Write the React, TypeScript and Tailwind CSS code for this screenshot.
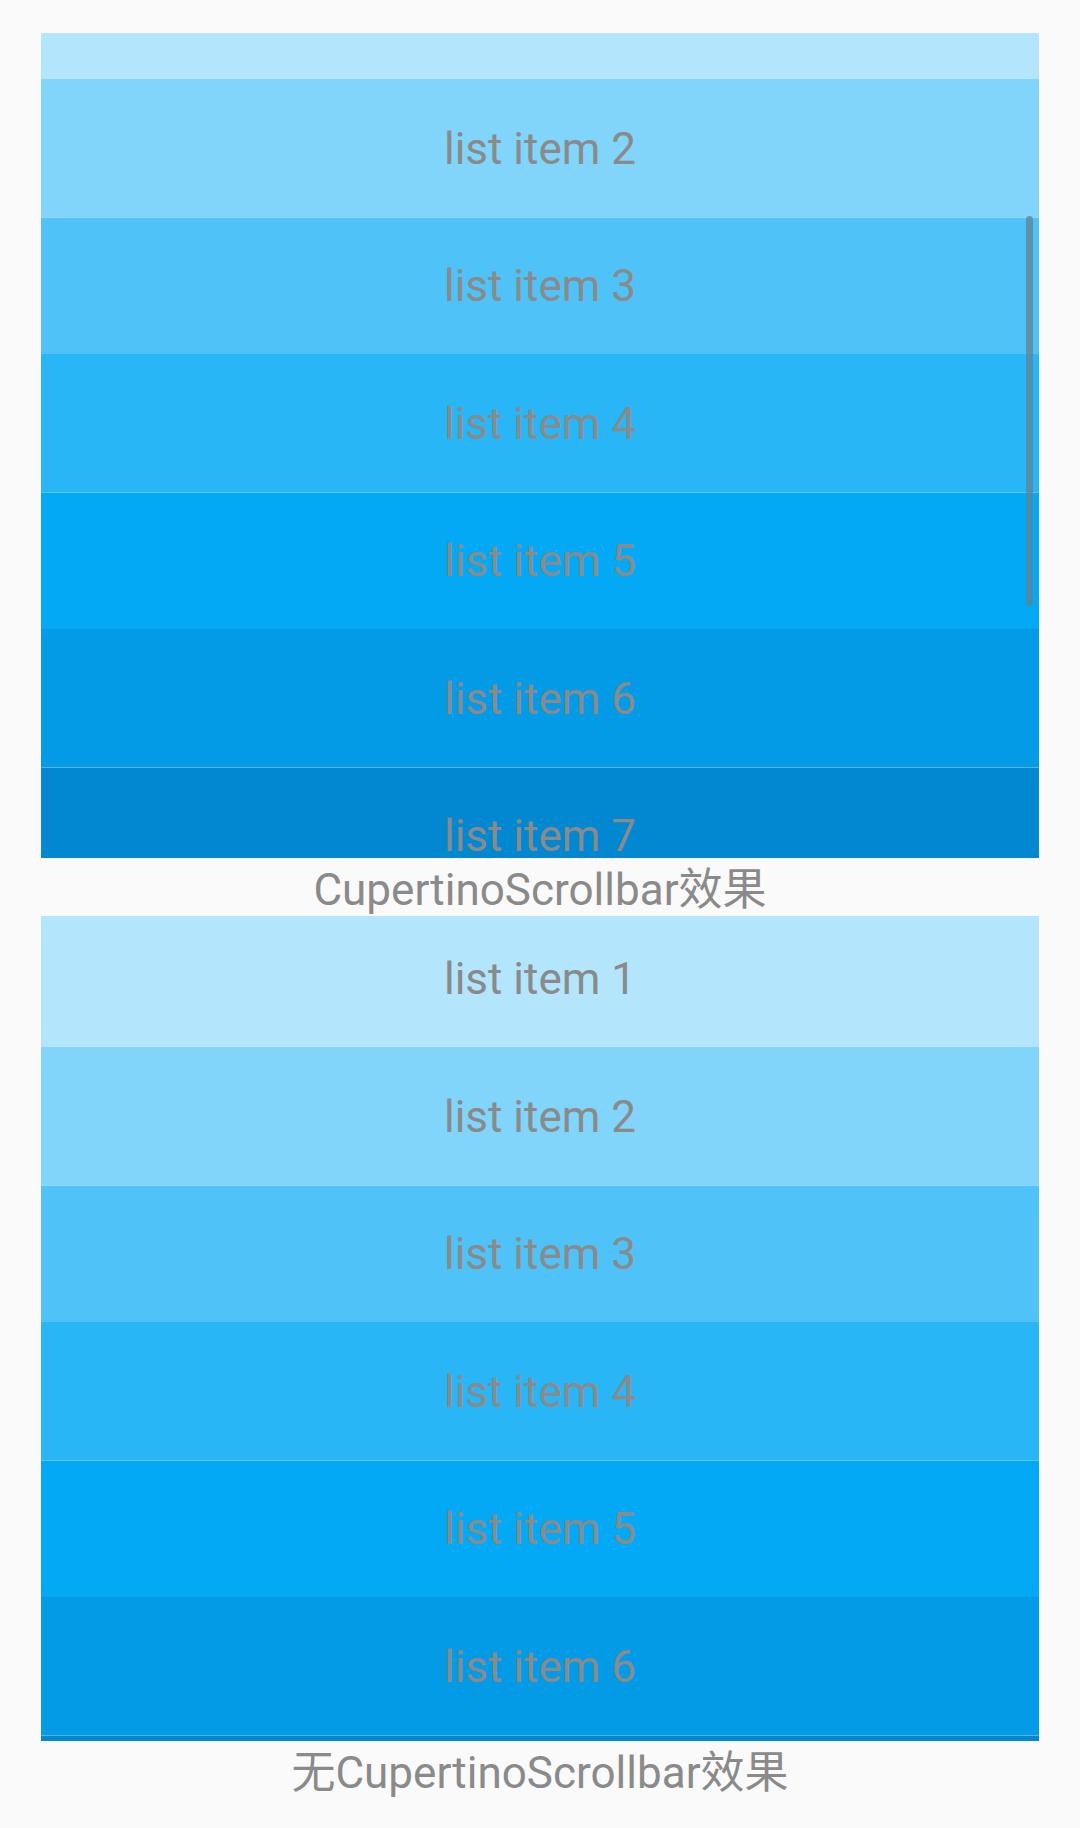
import React from 'react';

const shades = ['#b3e5fc', '#81d4fa', '#4fc3f7', '#29b6f6', '#03a9f4', '#039be5', '#0288d1'];

const font = { fontFamily: 'Roboto, "Noto Sans CJK SC", sans-serif' };

function ListItem({ n, color }: { n: number; color: string }) {
  // odd rows after the first get the faint seam line seen in the shot
  const seam = n > 1 && n % 2 === 1;
  return (
    <div
      className={
        'h-[137.5px] shrink-0 flex items-center justify-center pt-[2px] text-[44px] text-[#8a8a8a] ' +
        (seam ? 'shadow-[inset_0_1px_0_rgba(255,255,255,0.35)]' : '')
      }
      style={{ backgroundColor: color }}>
      list item {n}
    </div>
  );
}

function ListBox({ offset, scrollbar }: { offset: 'top' | 'bottom'; scrollbar?: boolean }) {
  return (
    <div className="relative h-[825px] overflow-hidden">
      <div className={offset === 'top' ? 'flex flex-col -mt-[91.5px]' : 'flex flex-col -mt-[6.2px]'}>
        {shades.map((c, i) => (
          <ListItem key={i} n={i + 1} color={c} />
        ))}
      </div>
      {scrollbar && (
        <div className="absolute right-[6px] top-[183px] w-[7px] h-[390px] rounded-full bg-[#608192]/75" />
      )}
    </div>
  );
}

function Caption({ children }: { children: React.ReactNode }) {
  return (
    <div className="h-[57.75px] flex items-center justify-center pt-[7px] text-[44px] leading-none text-[#8a8a8a]">
      {children}
    </div>
  );
}

export default function App() {
  return (
    <div className="min-h-[1828px] bg-[#fafafa] px-[41.25px] pt-[33px]" style={font}>
      <ListBox offset="top" scrollbar />
      <Caption>CupertinoScrollbar效果</Caption>
      <ListBox offset="bottom" />
      <Caption>无CupertinoScrollbar效果</Caption>
    </div>
  );
}
